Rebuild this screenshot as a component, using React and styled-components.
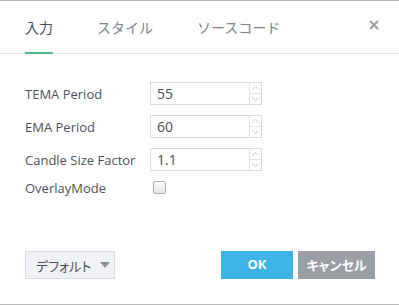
import React from "react";
import styled, { createGlobalStyle } from "styled-components";

const Global = createGlobalStyle`
  html, body { margin: 0; padding: 0; background: #fff; }
  body { font-family: "Open Sans", "Noto Sans CJK JP", sans-serif; }
  * { box-sizing: border-box; }
`;

const Dialog = styled.div`
  width: 399px;
  height: 305px;
  border-top: 1px solid #b9b9b9;
  border-bottom: 1px solid #b9b9b9;
  display: flex;
  flex-direction: column;
  background: #fff;
`;

const Header = styled.div`
  height: 53px;
  border-bottom: 1px solid #e0e3e8;
  display: flex;
  align-items: stretch;
  padding: 0 20px 0 25px;
`;

const Tab = styled.div`
  position: relative;
  display: flex;
  align-items: center;
  margin-right: 44px;
  padding-bottom: 1px;
  font-family: "Noto Sans CJK JP", sans-serif;
  font-size: 14px;
  color: ${(p) => (p.$active ? "#4a4f59" : "#7d828b")};
  &::after {
    content: "";
    display: ${(p) => (p.$active ? "block" : "none")};
    position: absolute;
    left: 0;
    right: 0;
    bottom: -1px;
    height: 2px;
    background: #53b987;
  }
`;

const Close = styled.div`
  margin-left: auto;
  display: flex;
  align-items: center;
  padding-bottom: 4px;
`;

const Body = styled.div`
  flex: 1;
  padding: 28px 25px 0;
  display: flex;
  flex-direction: column;
`;

const Row = styled.div`
  display: flex;
  align-items: center;
  height: 23px;
  margin-bottom: 10px;
`;

const CheckRow = styled(Row)`
  margin-top: -5px;
`;

const Label = styled.div`
  width: 125px;
  font-size: 13px;
  color: #4c5059;
  white-space: nowrap;
`;

const InputBox = styled.div`
  width: 112px;
  height: 23px;
  border: 1px solid #d9dce1;
  display: flex;
`;

const Value = styled.div`
  flex: 1;
  font-size: 14px;
  color: #4a4d55;
  padding-left: 6px;
  display: flex;
  align-items: center;
`;

const Spinner = styled.div`
  width: 12px;
  border-left: 1px solid #e3e5e9;
  display: flex;
  flex-direction: column;
`;

const SpinHalf = styled.div`
  flex: 1;
  display: flex;
  align-items: center;
  justify-content: center;
  & + & { border-top: 1px solid #e3e5e9; }
`;

const Check = styled.div`
  width: 13px;
  height: 13px;
  margin-left: 3px;
  border: 1px solid #a9acb1;
  border-radius: 2px;
  background: linear-gradient(#fdfdfd, #e6e6e6);
`;

const Footer = styled.div`
  display: flex;
  align-items: center;
  padding: 0 24px 25px 25px;
  gap: 5px;
`;

const DefaultBtn = styled.div`
  width: 90px;
  height: 28px;
  border: 1px solid #d7dadf;
  background: #f1f2f5;
  display: flex;
  align-items: center;
  padding-left: 10px;
  gap: 9px;
  font-family: "Noto Sans CJK JP", sans-serif;
  font-feature-settings: "palt";
  font-size: 13px;
  color: #4a4d55;
  margin-right: auto;
`;

const Btn = styled.div`
  width: ${(p) => p.$w}px;
  height: 28px;
  background: ${(p) => p.$bg};
  color: #fff;
  font-family: "Open Sans", "Noto Sans CJK JP", sans-serif;
  font-feature-settings: "palt";
  font-weight: bold;
  font-size: 13px;
  display: flex;
  align-items: center;
  justify-content: center;
  padding-bottom: 2px;
`;

const Chevron = ({ up }) => (
  <svg width="7" height="4" viewBox="0 0 7 4">
    <path
      d={up ? "M0.5 3.5 L3.5 0.5 L6.5 3.5" : "M0.5 0.5 L3.5 3.5 L6.5 0.5"}
      fill="none"
      stroke="#c4c8ce"
      strokeWidth="1"
    />
  </svg>
);

const NumberInput = ({ value }) => (
  <InputBox>
    <Value>{value}</Value>
    <Spinner>
      <SpinHalf><Chevron up /></SpinHalf>
      <SpinHalf><Chevron /></SpinHalf>
    </Spinner>
  </InputBox>
);

const fields = [
  ["TEMA Period", "55"],
  ["EMA Period", "60"],
  ["Candle Size Factor", "1.1"],
];

export default function App() {
  return (
    <>
      <Global />
      <Dialog>
        <Header>
          <Tab $active>入力</Tab>
          <Tab>スタイル</Tab>
          <Tab>ソースコード</Tab>
          <Close>
            <svg width="10" height="10" viewBox="0 0 10 10">
              <path d="M1 1 L9 9 M9 1 L1 9" stroke="#9a9ea6" strokeWidth="2" />
            </svg>
          </Close>
        </Header>
        <Body>
          {fields.map(([l, v]) => (
            <Row key={l}>
              <Label>{l}</Label>
              <NumberInput value={v} />
            </Row>
          ))}
          <CheckRow>
            <Label>OverlayMode</Label>
            <Check />
          </CheckRow>
        </Body>
        <Footer>
          <DefaultBtn>
            デフォルト
            <svg width="10" height="6" viewBox="0 0 10 6">
              <path d="M0 0 L10 0 L5 6 Z" fill="#8c9097" />
            </svg>
          </DefaultBtn>
          <Btn $w={72} $bg="#3cb4e5">OK</Btn>
          <Btn $w={77} $bg="#9b9ea5">キャンセル</Btn>
        </Footer>
      </Dialog>
    </>
  );
}
